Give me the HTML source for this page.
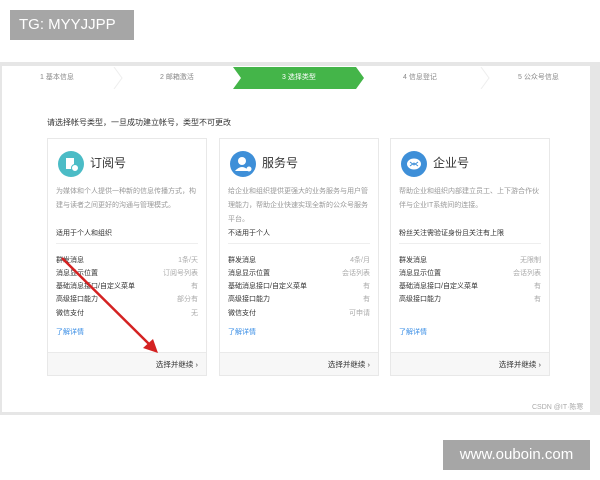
<!DOCTYPE html>
<html><head><meta charset="utf-8"><style>
*{margin:0;padding:0;box-sizing:border-box}
body{width:600px;height:480px;background:#fff;position:relative;overflow:hidden;font-family:"Liberation Sans","Noto Sans CJK SC",sans-serif;color:#333}
.a{position:absolute;white-space:nowrap}
.frame{position:absolute;left:0;top:62px;width:600px;height:353px;background:#e6e6e6}
.inner{position:absolute;left:2px;top:66px;width:588px;height:346px;background:#fff}
.step{position:absolute;top:72px;font-size:7px;color:#888}
.card{position:absolute;top:138px;width:160px;height:238px;border:1px solid #e8e8e8;background:#fff}
.card .t{position:absolute;left:42px;top:15px;font-size:12px;color:#333}
.card .ic{position:absolute;left:10px;top:12px;width:26px;height:26px;border-radius:50%}
.card .d{position:absolute;left:8px;top:46px;font-size:7px;line-height:14px;color:#999;width:142px;white-space:normal}
.card .s{position:absolute;left:8px;top:89px;font-size:7px;color:#333}
.card .hr{position:absolute;left:8px;right:8px;top:104px;height:1px;background:#eee}
.card .r{position:absolute;left:8px;right:8px;font-size:7px;height:10px}
.card .r span{position:absolute;right:0;color:#aaa}
.card .l{position:absolute;left:8px;top:188px;font-size:7px;color:#3a8ee6}
.card .f{position:absolute;left:0;right:0;bottom:0;height:23px;background:#f7f7f7;border-top:1px solid #eaeaea;font-size:7.5px;text-align:right;padding:6px 8px 0 0;color:#333}
</style></head><body>
<div class="a" style="left:10px;top:10px;width:124px;height:30px;background:#a6a6a6;color:#fff;font-size:15px;line-height:30px;padding-left:9px">TG: MYYJJPP</div>
<div class="frame"></div><div class="inner"></div>
<svg class="a" style="left:2px;top:67px" width="588" height="22">
<polyline points="112,0 120,11 112,22" fill="none" stroke="#eee"/>
<polyline points="479,0 487,11 479,22" fill="none" stroke="#eee"/>
<polygon points="231,0 354,0 362,11 354,22 231,22 239,11" fill="#44b549"/>
</svg>
<div class="step" style="left:40px">1 基本信息</div>
<div class="step" style="left:160px">2 邮箱激活</div>
<div class="step" style="left:282px;color:#fff">3 选择类型</div>
<div class="step" style="left:403px">4 信息登记</div>
<div class="step" style="left:518px">5 公众号信息</div>
<div class="a" style="left:47px;top:117px;font-size:8px;color:#333">请选择帐号类型，一旦成功建立帐号，类型不可更改</div>

<div class="card" style="left:47px">
<div class="ic" style="background:#4bbcc6"><svg width="26" height="26"><rect x="8" y="7" width="8" height="11" fill="#fff"/><circle cx="17" cy="17" r="3.5" fill="#fff" stroke="#4bbcc6"/></svg></div>
<div class="t">订阅号</div>
<div class="d">为媒体和个人提供一种新的信息传播方式，构建与读者之间更好的沟通与管理模式。</div>
<div class="s">适用于个人和组织</div><div class="hr"></div>
<div class="r" style="top:116px">群发消息<span>1条/天</span></div>
<div class="r" style="top:129px">消息显示位置<span>订阅号列表</span></div>
<div class="r" style="top:142px">基础消息接口/自定义菜单<span>有</span></div>
<div class="r" style="top:155px">高级接口能力<span>部分有</span></div>
<div class="r" style="top:169px">微信支付<span>无</span></div>
<div class="l">了解详情</div>
<div class="f">选择并继续 ›</div>
</div>

<div class="card" style="left:219px">
<div class="ic" style="background:#3e8fd8"><svg width="26" height="26"><circle cx="12" cy="10" r="4" fill="#fff"/><path d="M5 20 Q12 12 19 20Z" fill="#fff"/><circle cx="19" cy="18" r="2.5" fill="#fff"/></svg></div>
<div class="t">服务号</div>
<div class="d">给企业和组织提供更强大的业务服务与用户管理能力，帮助企业快速实现全新的公众号服务平台。</div>
<div class="s">不适用于个人</div><div class="hr"></div>
<div class="r" style="top:116px">群发消息<span>4条/月</span></div>
<div class="r" style="top:129px">消息显示位置<span>会话列表</span></div>
<div class="r" style="top:142px">基础消息接口/自定义菜单<span>有</span></div>
<div class="r" style="top:155px">高级接口能力<span>有</span></div>
<div class="r" style="top:169px">微信支付<span>可申请</span></div>
<div class="l">了解详情</div>
<div class="f">选择并继续 ›</div>
</div>

<div class="card" style="left:390px">
<div class="ic" style="background:#3e8fd8"><svg width="26" height="26"><ellipse cx="13" cy="13" rx="7" ry="5.5" fill="#fff"/><path d="M9 11 L13 14 L17 11 M9 15 L13 12 L17 15" stroke="#3e8fd8" fill="none" stroke-width="1"/></svg></div>
<div class="t">企业号</div>
<div class="d">帮助企业和组织内部建立员工、上下游合作伙伴与企业IT系统间的连接。</div>
<div class="s">粉丝关注需验证身份且关注有上限</div><div class="hr"></div>
<div class="r" style="top:116px">群发消息<span>无限制</span></div>
<div class="r" style="top:129px">消息显示位置<span>会话列表</span></div>
<div class="r" style="top:142px">基础消息接口/自定义菜单<span>有</span></div>
<div class="r" style="top:155px">高级接口能力<span>有</span></div>
<div class="l">了解详情</div>
<div class="f">选择并继续 ›</div>
</div>

<svg class="a" style="left:0;top:0" width="600" height="480">
<line x1="62" y1="258" x2="150" y2="345" stroke="#d42222" stroke-width="2.5"/>
<polygon points="158,353 143,348 153,339" fill="#d42222"/>
</svg>
<div class="a" style="left:532px;top:402px;font-size:7px;color:#aaa">CSDN @IT·陈寒</div>
<div class="a" style="left:443px;top:440px;width:147px;height:30px;background:#a6a6a6;color:#fff;font-size:15px;line-height:30px;text-align:center">www.ouboin.com</div>
</body></html>
